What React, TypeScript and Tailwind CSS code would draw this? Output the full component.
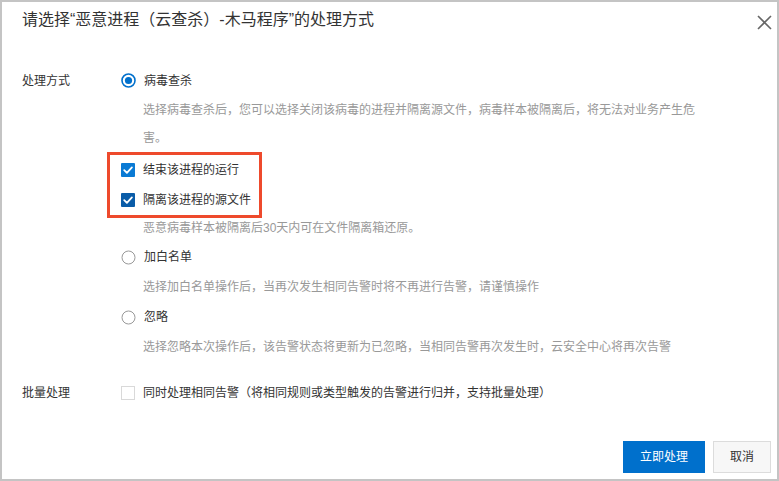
import React from "react";

function RadioOn() {
  return (
    <svg width="15" height="15" viewBox="0 0 15 15" className="shrink-0">
      <circle cx="7.5" cy="7.5" r="6.5" fill="#fff" stroke="#0070cc" strokeWidth="1.6" />
      <circle cx="7.5" cy="7.5" r="3.6" fill="#0070cc" />
    </svg>
  );
}

function RadioOff() {
  return (
    <svg width="15" height="15" viewBox="0 0 15 15" className="shrink-0">
      <circle cx="7.5" cy="7.5" r="6.5" fill="#fff" stroke="#999" strokeWidth="1" />
    </svg>
  );
}

function CheckOn({ color }: { color: string }) {
  return (
    <svg width="14" height="14" viewBox="0 0 14 14" className="shrink-0">
      <rect x="0" y="0" width="14" height="14" rx="1" fill={color} />
      <path d="M3.2 7.2 L5.9 9.8 L10.9 4.4" fill="none" stroke="#fff" strokeWidth="1.8" strokeLinecap="round" strokeLinejoin="round" />
    </svg>
  );
}

export default function App() {
  return (
    <div className="w-[779px] h-[481px] border-2 border-[#c4c4c4] bg-white flex flex-col text-[12px] text-[#333] font-['Liberation_Sans','Noto_Sans_CJK_SC',sans-serif]">
      <div className="h-[63px] flex justify-between items-start pl-[20px] pr-[5px] pt-[6px] shrink-0">
        <div className="text-[16px] leading-[24px] text-[#333]">请选择“恶意进程（云查杀）-木马程序”的处理方式</div>
        <svg width="15" height="15" viewBox="0 0 15 15" className="mt-[7px]">
          <path d="M1 1 L14 14 M14 1 L1 14" stroke="#666" strokeWidth="1.6" />
        </svg>
      </div>

      <div className="pl-[20px] flex flex-col">
        <div className="flex">
          <div className="w-[99px] h-[31px] flex items-center shrink-0">处理方式</div>
          <div className="flex flex-col">
            <div className="h-[31px] flex items-center gap-[8px]">
              <RadioOn />
              <span>病毒查杀</span>
            </div>
            <div className="pl-[22px] w-[578px] leading-[28px] text-[#999]">
              选择病毒查杀后，您可以选择关闭该病毒的进程并隔离源文件，病毒样本被隔离后，将无法对业务产生危害。
            </div>
            <div className="-ml-[14px] w-[155px] border-[3px] border-[#ee4a2c] pl-[11px] flex flex-col">
              <div className="h-[30px] flex items-center gap-[8px]">
                <CheckOn color="#0a7ad4" />
                <span>结束该进程的运行</span>
              </div>
              <div className="h-[30px] flex items-center gap-[8px]">
                <CheckOn color="#0a5ca8" />
                <span>隔离该进程的源文件</span>
              </div>
            </div>
            <div className="pl-[22px] h-[24px] leading-[20px] text-[#999]">恶意病毒样本被隔离后30天内可在文件隔离箱还原。</div>
            <div className="h-[30px] flex items-center gap-[8px]">
              <RadioOff />
              <span>加白名单</span>
            </div>
            <div className="pl-[22px] h-[30px] leading-[30px] text-[#999]">选择加白名单操作后，当再次发生相同告警时将不再进行告警，请谨慎操作</div>
            <div className="h-[30px] flex items-center gap-[8px]">
              <RadioOff />
              <span>忽略</span>
            </div>
            <div className="pl-[22px] h-[30px] leading-[30px] text-[#999]">选择忽略本次操作后，该告警状态将更新为已忽略，当相同告警再次发生时，云安全中心将再次告警</div>
          </div>
        </div>

        <div className="flex mt-[16px]">
          <div className="w-[99px] h-[30px] flex items-center shrink-0">批量处理</div>
          <div className="h-[30px] flex items-center gap-[8px]">
            <div className="w-[14px] h-[14px] border border-[#d9d9d9] bg-white shrink-0" />
            <span>同时处理相同告警（将相同规则或类型触发的告警进行归并，支持批量处理）</span>
          </div>
        </div>
      </div>

      <div className="mt-auto flex justify-end gap-[8px] pr-[6px] pb-[6px]">
        <button className="w-[82px] h-[32px] bg-[#0070cc] text-white text-[12px]">立即处理</button>
        <button className="w-[58px] h-[32px] bg-[#f7f7f7] border border-[#dcdcdc] text-[#333] text-[12px]">取消</button>
      </div>
    </div>
  );
}
